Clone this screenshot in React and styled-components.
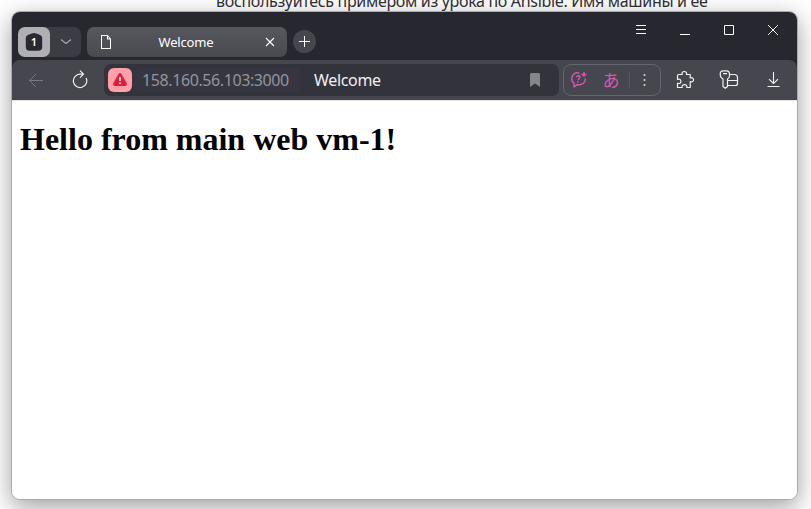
import React from "react";
import styled, { createGlobalStyle } from "styled-components";

const GlobalStyle = createGlobalStyle`
  * { box-sizing: border-box; }
  body { margin: 0; background: #fff; overflow: hidden; }
  button { border: 0; padding: 0; margin: 0; background: none; color: inherit; font: inherit; }
  svg { display: block; flex: none; }
`;

const Desktop = styled.div`
  position: relative;
  width: 811px;
  height: 509px;
  padding: 11px 13px 9px 11px;
  overflow: hidden;
  background: #fff;
  font-family: "Noto Sans", "Open Sans", sans-serif;
`;

const PageBehind = styled.p`
  position: absolute;
  left: 216px;
  top: -10px;
  margin: 0;
  font-size: 16px;
  line-height: 22px;
  letter-spacing: -0.32px;
  white-space: nowrap;
  color: #303036;
`;

const Window = styled.section`
  position: relative;
  display: flex;
  flex-direction: column;
  width: 787px;
  height: 489px;
  border: 1px solid #aaa;
  border-radius: 9px;
  background: #fff;
  overflow: hidden;
  box-shadow: 0 7px 24px rgba(0, 0, 0, 0.38);
`;

const TabStrip = styled.header`
  display: flex;
  flex: none;
  height: 48px;
  background: #272730;
  color: #fff;
`;

const TabGroup = styled.div`
  display: flex;
  width: 63px;
  height: 30px;
  margin: 15px 6px 0 6px;
  border-radius: 7px;
  background: #3c3c45;
`;

const GroupCount = styled.button`
  display: grid;
  place-items: center;
  width: 32px;
  height: 30px;
  border-radius: 7px;
  background: #b0b0b4;
`;

const Badge = styled.span`
  position: relative;
  display: grid;
  place-items: center;
  width: 18px;
  height: 20px;
  font-size: 11px;
  line-height: 18px;

  svg { position: absolute; inset: 0; }
  b { position: relative; font-weight: 600; }
`;

const GroupToggle = styled.button`
  display: grid;
  place-items: center;
  width: 31px;
  height: 30px;
`;

const Tab = styled.div`
  display: grid;
  grid-template-columns: 38px 1fr 34px;
  align-items: center;
  justify-items: center;
  width: 200px;
  height: 30px;
  margin-top: 15px;
  border-radius: 7px;
  background: linear-gradient(#57575e, #494951);
`;

const TabTitle = styled.span`
  width: 100%;
  padding-right: 6px;
  font-size: 13px;
  line-height: 18px;
  letter-spacing: -0.15px;
  text-align: center;
`;

const NewTab = styled.button`
  display: grid;
  place-items: center;
  width: 23px;
  height: 23px;
  margin: 18px 0 0 6px;
  border-radius: 50%;
  background: #46464e;
`;

const WindowControls = styled.div`
  display: flex;
  height: 36px;
  margin: 0 2px 0 auto;
`;

const ControlButton = styled.button`
  display: grid;
  place-items: center;
  width: 44px;
  height: 36px;
`;

const ToolbarBack = styled.div`
  flex: none;
  height: 41px;
  background: #272730;
  border-bottom: 1px solid #e2e2e4;
`;

const Toolbar = styled.nav`
  display: flex;
  align-items: center;
  height: 40px;
  padding-left: 2px;
  border-radius: 8px 8px 0 0;
  background: #46464f;
  color: #f0f0f2;
`;

const NavButton = styled.button`
  display: grid;
  place-items: center;
  width: 44px;
  height: 40px;
  color: ${(p) => (p.$dim ? "#797981" : "inherit")};
`;

const AddressBar = styled.div`
  display: flex;
  align-items: center;
  width: 455px;
  height: 32px;
  margin-left: 2px;
  padding: 0 17px 0 4px;
  border-radius: 7px;
  background: #33333c;
  font-size: 16px;
  line-height: 24px;
  white-space: nowrap;
`;

const Warning = styled.span`
  display: grid;
  place-items: center;
  width: 24px;
  height: 24px;
  border-radius: 6px;
  background: #ff9fa8;
`;

const Host = styled.span`
  width: 167px;
  height: 24px;
  margin-left: 1px;
  padding-left: 9px;
  border-radius: 6px;
  background: #363640;
  color: #94949b;
  letter-spacing: -0.4px;
`;

const DocumentTitle = styled.span`
  flex: 1;
  margin-left: 14px;
  letter-spacing: -0.32px;
`;

const Assistants = styled.div`
  display: flex;
  align-items: center;
  width: 98px;
  height: 32px;
  margin: 0 2px 0 4px;
  border: 1px solid #65656d;
  border-radius: 8px;
`;

const AssistantButton = styled.button`
  display: grid;
  place-items: center;
  width: ${(p) => p.$width}px;
  height: 30px;
  color: #dc55b6;
  font: 400 17px/24px "Noto Sans CJK JP", sans-serif;
`;

const MoreButton = styled.button`
  display: grid;
  place-items: center;
  width: 31px;
  height: 30px;
`;

const Divider = styled.span`
  width: 1px;
  height: 18px;
  background: #55555d;
`;

const Content = styled.main`
  flex: 1;
  padding: 0 8px;
  background: #fff;
`;

const Heading = styled.h1`
  margin: 20px 0 0;
  font: bold 32px/37px "Liberation Serif", "Times New Roman", serif;
  color: #000;
`;

const Icon = ({ w = 20, h = w, stroke = 1.2, children }) => (
  <svg
    width={w}
    height={h}
    viewBox={`0 0 ${w} ${h}`}
    fill="none"
    stroke="currentColor"
    strokeWidth={stroke}
    strokeLinejoin="round"
  >
    {children}
  </svg>
);

export default function App() {
  return (
    <>
      <GlobalStyle />
      <Desktop>
        <PageBehind>воспользуйтесь примером из урока по Ansible. Имя машины и её</PageBehind>
        <Window>
          <TabStrip>
            <TabGroup>
              <GroupCount aria-label="Tab group">
                <Badge>
                  <svg width="18" height="20" viewBox="0 0 18 20">
                    <path d="M6.8 1.4Q9 .6 11.2 1.4L15.2 2.9Q17.2 3.7 17.2 6V15Q17.2 18.8 13.4 18.8H4.6Q.8 18.8 .8 15V6Q.8 3.7 2.8 2.9Z" fill="#292932" />
                  </svg>
                  <b>1</b>
                </Badge>
              </GroupCount>
              <GroupToggle aria-label="Show tabs">
                <Icon w={12} h={8}><g stroke="#a6a6ad"><path d="M1 1.5 6 5.5 11 1.5" /></g></Icon>
              </GroupToggle>
            </TabGroup>
            <Tab>
              <Icon w={12} h={16} stroke={1.05}>
                <path d="M1.5 1.5H7.5L10.5 5V14.5H1.5ZM7.5 1.5V5H10.5" />
              </Icon>
              <TabTitle>Welcome</TabTitle>
              <Icon w={10} stroke={1.1}><path d="M1 1 9 9M9 1 1 9" /></Icon>
            </Tab>
            <NewTab aria-label="New tab">
              <Icon w={11} stroke={1}><path d="M5.5 0V11M0 5.5H11" /></Icon>
            </NewTab>
            <WindowControls>
              <ControlButton aria-label="Menu">
                <Icon w={10} stroke={1}><path d="M0 .5H10M0 4.5H10M0 8.5H10" /></Icon>
              </ControlButton>
              <ControlButton aria-label="Minimize">
                <Icon w={10} stroke={1}><path d="M0 9.5H10" /></Icon>
              </ControlButton>
              <ControlButton aria-label="Maximize">
                <Icon w={10} stroke={1}><path d="M.5 .5H9.5V9.5H.5Z" /></Icon>
              </ControlButton>
              <ControlButton aria-label="Close">
                <Icon w={10} stroke={1}><path d="M0 0 10 10M10 0 0 10" /></Icon>
              </ControlButton>
            </WindowControls>
          </TabStrip>

          <ToolbarBack>
            <Toolbar>
              <NavButton $dim aria-label="Back">
                <Icon w={16} stroke={1}><path d="M15 8.5H1.5M8 2 1.5 8.5 8 15" /></Icon>
              </NavButton>
              <NavButton aria-label="Reload">
                <Icon w={16} h={20} stroke={1.2}>
                  <path d="M14.1 8A6.7 6.7 0 1 1 8 4.2H11.5M8 .7 11.5 4.2 8 7.7" />
                </Icon>
              </NavButton>
              <AddressBar>
                <Warning>
                  <svg width="16" height="16" viewBox="0 0 16 16">
                    <path d="M6.5 2Q8 .2 9.5 2L14.7 11Q15.5 14 12.7 14H3.3Q.5 14 1.3 11Z" fill="#d9213f" />
                    <path d="M8 5V9M8 10.5V12" stroke="#fff0f2" strokeWidth="1.6" />
                  </svg>
                </Warning>
                <Host>158.160.56.103:3000</Host>
                <DocumentTitle>Welcome</DocumentTitle>
                <svg width="14" height="14" viewBox="0 0 14 14">
                  <path d="M2 1.5Q2 0 3.5 0H10.5Q12 0 12 1.5V14L7 10.5 2 14Z" fill="#85858c" />
                </svg>
              </AddressBar>
              <Assistants>
                <AssistantButton $width={30} aria-label="Assistant">
                  <Icon w={18} h={18} stroke={1.4}>
                    <path d="M9.5 2.2C5 .6 1.7 4 1.7 8Q1.7 10.5 4 12.3V15.8L7.3 13.6C12.5 14.5 15.8 11.2 15.4 7.5" />
                    <path d="M6.4 6.3Q7.2 4.3 9.2 4.8 11 5.8 9 7.4L8.2 9.3M7.8 10.5V11.7M14 1V6M11.5 3.5H16.5" />
                  </Icon>
                </AssistantButton>
                <AssistantButton $width={36}>あ</AssistantButton>
                <Divider />
                <MoreButton aria-label="More">
                  <svg width="3" height="14" viewBox="0 0 3 14" fill="#ddd">
                    <circle cx="1.5" cy="2" r="1" />
                    <circle cx="1.5" cy="7" r="1" />
                    <circle cx="1.5" cy="12" r="1" />
                  </svg>
                </MoreButton>
              </Assistants>
              <NavButton aria-label="Extensions">
                <Icon w={20}>
                  <path d="M3.5 4.5H7.2C6.4 2.7 7.7 1.5 9.3 1.5S12.2 2.7 11.4 4.5H15.2V8C17.2 7.2 18.5 8.2 18.5 9.8S17.2 12.4 15.2 11.6V17.5H11.8C12.4 15.5 11.2 14.6 9.5 14.6S6.6 15.5 7.2 17.5H2.5V13.2C4.8 14 5.9 13 5.9 11.3S4.8 8.7 2.5 9.5V5.5Q2.5 4.5 3.5 4.5Z" />
                </Icon>
              </NavButton>
              <NavButton aria-label="Passwords">
                <Icon w={20}>
                  <path d="M4 .8H8Q10.5 1.3 10.5 3.8V6Q10.2 8 8.5 9V16.5L6.3 18.3 4 16.5V9Q1.2 7.5 1.2 4.2 1.2 .8 4 .8ZM4 3.6H8" />
                  <path d="M10.5 4.5H16Q18.5 5 18.5 7.5V13.5Q18.5 15.5 16.5 15.5H8.5M8.8 10.5H18.5" />
                </Icon>
              </NavButton>
              <NavButton aria-label="Downloads">
                <Icon w={15} h={18} stroke={1.1}><path d="M7.5 1V12.5M3 8.2 7.5 12.5 12 8.2M1.5 15.5H13.5" /></Icon>
              </NavButton>
            </Toolbar>
          </ToolbarBack>
          <Content>
            <Heading>Hello from main web vm-1!</Heading>
          </Content>
        </Window>
      </Desktop>
    </>
  );
}
